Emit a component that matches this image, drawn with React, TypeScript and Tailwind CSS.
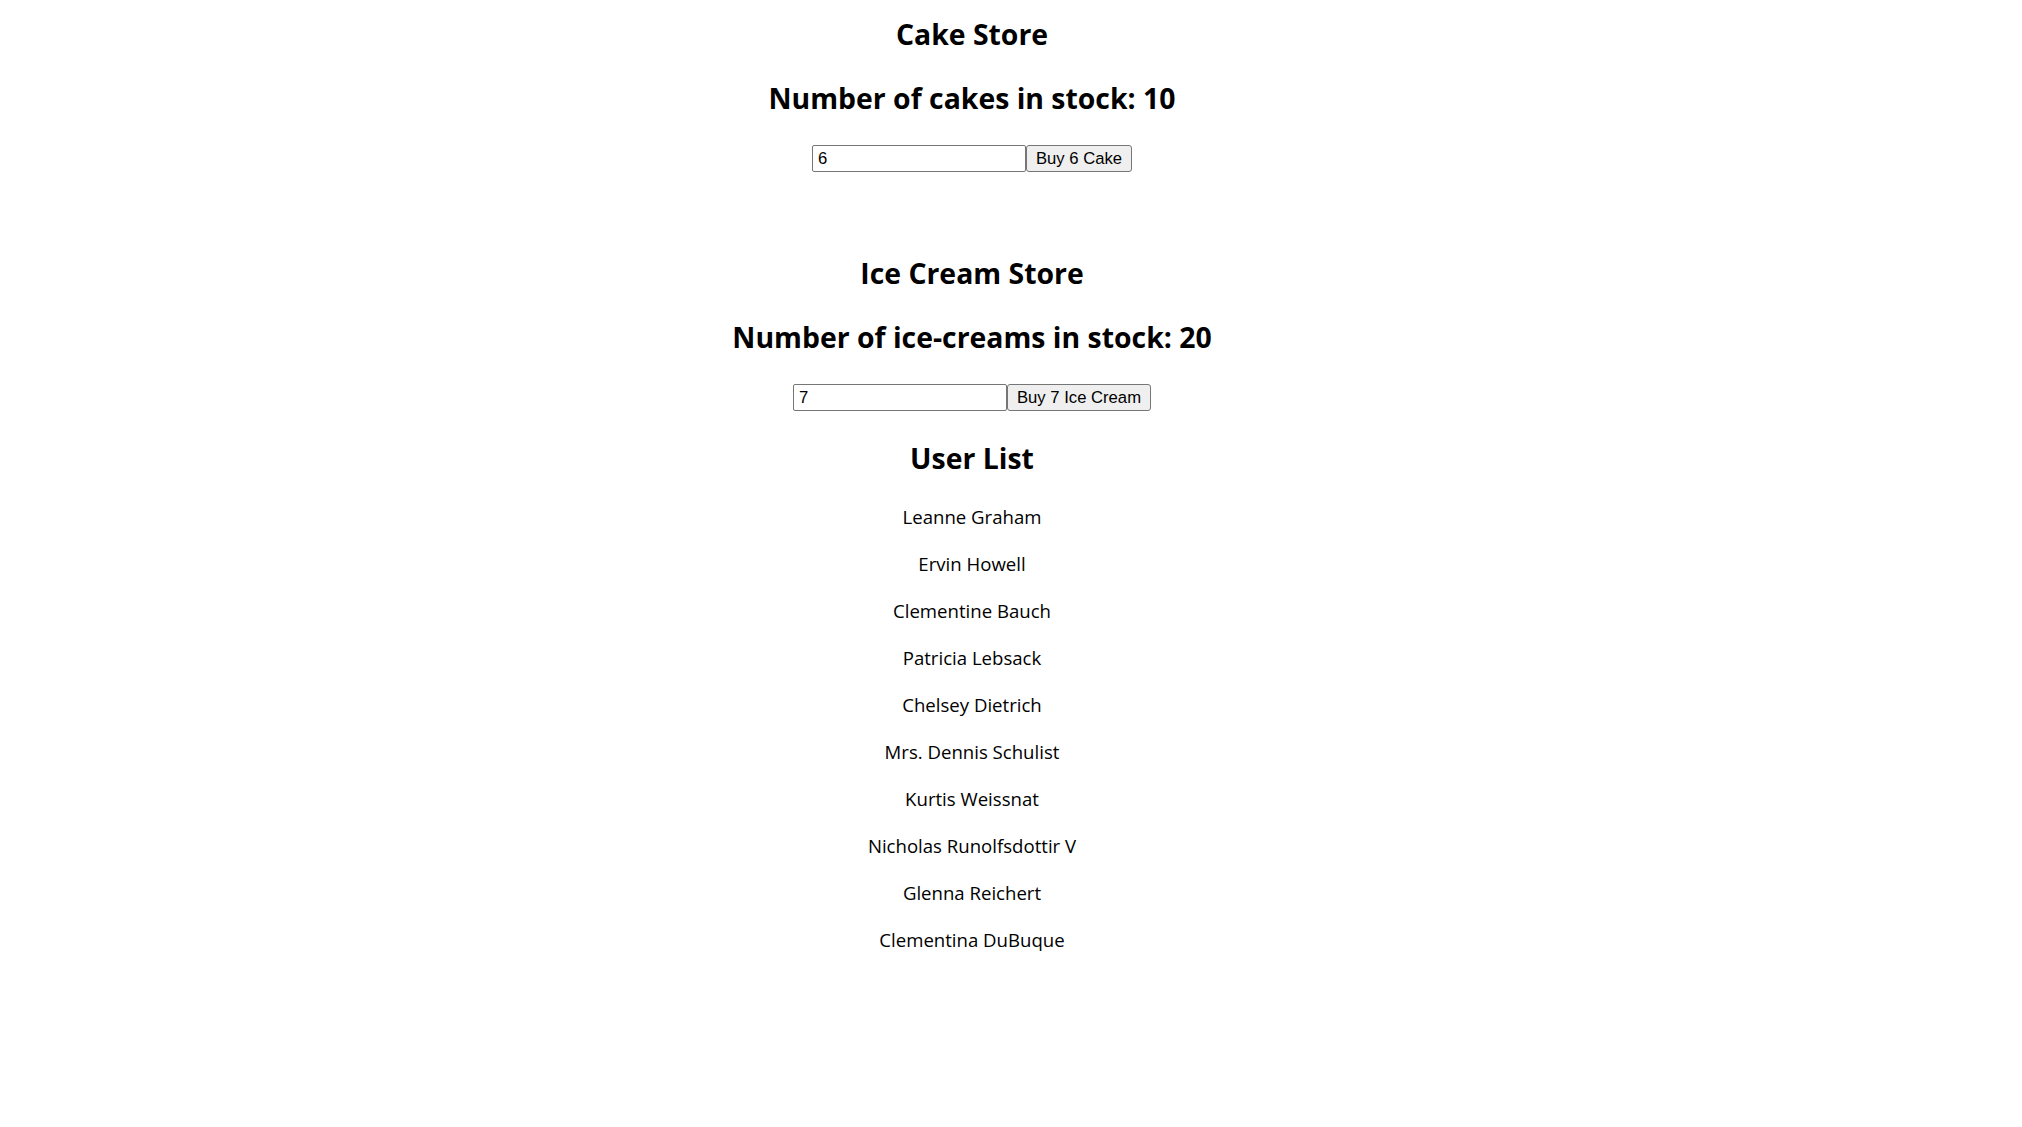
import React from "react";

const users = [
  "Leanne Graham",
  "Ervin Howell",
  "Clementine Bauch",
  "Patricia Lebsack",
  "Chelsey Dietrich",
  "Mrs. Dennis Schulist",
  "Kurtis Weissnat",
  "Nicholas Runolfsdottir V",
  "Glenna Reichert",
  "Clementina DuBuque",
];

function Heading({ children, className }: { children: React.ReactNode; className: string }) {
  return (
    <h2 className={`h-[40px] leading-[40px] text-[28.4px] font-bold text-black ${className}`}>
      {children}
    </h2>
  );
}

function BuyRow({ value, label }: { value: string; label: string }) {
  return (
    <div className="flex justify-center mt-[27px]">
      <input
        readOnly
        value={value}
        className="w-[214px] h-[27px] border border-[#767676] rounded-[2px] bg-white pl-[5px] text-[16.67px] text-black outline-none font-['Liberation_Sans',Arial,sans-serif]"
      />
      <button className="h-[27px] px-[9px] border border-[#767676] rounded-[3px] bg-[#efefef] text-[16.67px] leading-[19px] text-black font-['Liberation_Sans',Arial,sans-serif]">
        {label}
      </button>
    </div>
  );
}

export default function App() {
  return (
    <div className="w-[1944px] min-h-[1127px] bg-white text-center font-['Open_Sans','Noto_Sans',sans-serif] text-black">
      <div className="pt-[14px]">
        <Heading className="">Cake Store</Heading>
        <Heading className="mt-[24px]">Number of cakes in stock: 10</Heading>
        <BuyRow value="6" label="Buy 6 Cake" />
      </div>
      <div className="mt-[81px]">
        <Heading className="">Ice Cream Store</Heading>
        <Heading className="mt-[24px]">Number of ice-creams in stock: 20</Heading>
        <BuyRow value="7" label="Buy 7 Ice Cream" />
      </div>
      <div className="mt-[27px]">
        <Heading className="">User List</Heading>
        <div className="mt-[25px] flex flex-col gap-[20px]">
          {users.map((u) => (
            <p key={u} className="h-[27px] leading-[27px] text-[18.6px]">
              {u}
            </p>
          ))}
        </div>
      </div>
    </div>
  );
}
